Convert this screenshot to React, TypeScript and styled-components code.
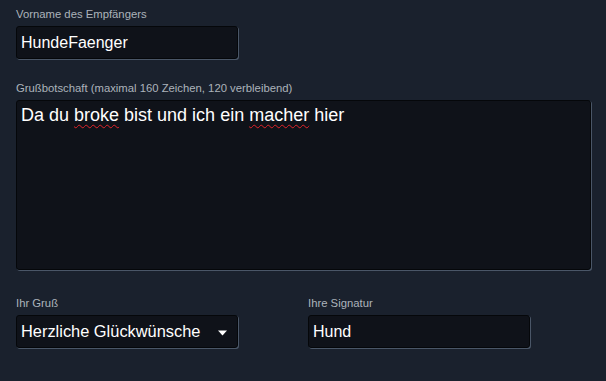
import React from "react";
import styled, { createGlobalStyle } from "styled-components";

const Global = createGlobalStyle`
  html, body { margin: 0; padding: 0; background: #1a212d; }
  body { font-family: "Liberation Sans", Arial, sans-serif; }
`;

const Page = styled.div`
  width: 606px;
  height: 381px;
  box-sizing: border-box;
  padding: 7px 15px 0 16px;
  background: #1a212d;
  display: flex;
  flex-direction: column;
`;

const Field = styled.div<{ $gap?: number }>`
  display: flex;
  flex-direction: column;
  gap: 5px;
  margin-bottom: ${(p) => p.$gap ?? 0}px;
`;

const Label = styled.div`
  font-family: "Liberation Sans", Arial, sans-serif;
  font-size: 11.3px;
  line-height: 14px;
  color: #acb3bb;
  white-space: nowrap;
`;

const Box = styled.div<{ $w: number; $h: number }>`
  box-sizing: border-box;
  width: ${(p) => p.$w}px;
  height: ${(p) => p.$h}px;
  background: #0f1219;
  border: 1px solid #05070a;
  border-radius: 3px;
  box-shadow: 1px 1px 0 #4a5667;
  color: #ffffff;
  font-family: "Liberation Sans", Arial, sans-serif;
`;

const TextInput = styled(Box)`
  display: flex;
  align-items: center;
  padding: 0 4px;
  font-size: 16px;
`;

const TextArea = styled(Box)`
  padding: 4px 4px;
  font-size: 18px;
  line-height: normal;
`;

const Misspelled = styled.span`
  text-decoration: underline wavy #e0242a;
  text-decoration-thickness: 1px;
  text-underline-offset: 3px;
  text-decoration-skip-ink: none;
`;

const Select = styled(Box)`
  display: flex;
  align-items: center;
  justify-content: space-between;
  padding: 0 10px 0 4px;
  font-size: 16.4px;
`;

const Row = styled.div`
  display: grid;
  grid-template-columns: 292px 1fr;
`;

const Arrow = () => (
  <svg width="9" height="6" viewBox="0 0 9 6" style={{ marginTop: 3 }}>
    <polygon points="0,0.5 9,0.5 4.5,5.5" fill="#ffffff" />
  </svg>
);

export default function App() {
  return (
    <>
      <Global />
      <Page>
        <Field $gap={22}>
          <Label>Vorname des Empfängers</Label>
          <TextInput $w={222} $h={33}>HundeFaenger</TextInput>
        </Field>
        <Field $gap={26}>
          <Label>Grußbotschaft (maximal 160 Zeichen, 120 verbleibend)</Label>
          <TextArea $w={575} $h={170}>
            Da du <Misspelled>broke</Misspelled> bist und ich ein{" "}
            <Misspelled>macher</Misspelled> hier
          </TextArea>
        </Field>
        <Row>
          <Field>
            <Label>Ihr Gruß</Label>
            <Select $w={222} $h={33}>
              <span>Herzliche Glückwünsche</span>
              <Arrow />
            </Select>
          </Field>
          <Field>
            <Label>Ihre Signatur</Label>
            <TextInput $w={222} $h={33}>Hund</TextInput>
          </Field>
        </Row>
      </Page>
    </>
  );
}
